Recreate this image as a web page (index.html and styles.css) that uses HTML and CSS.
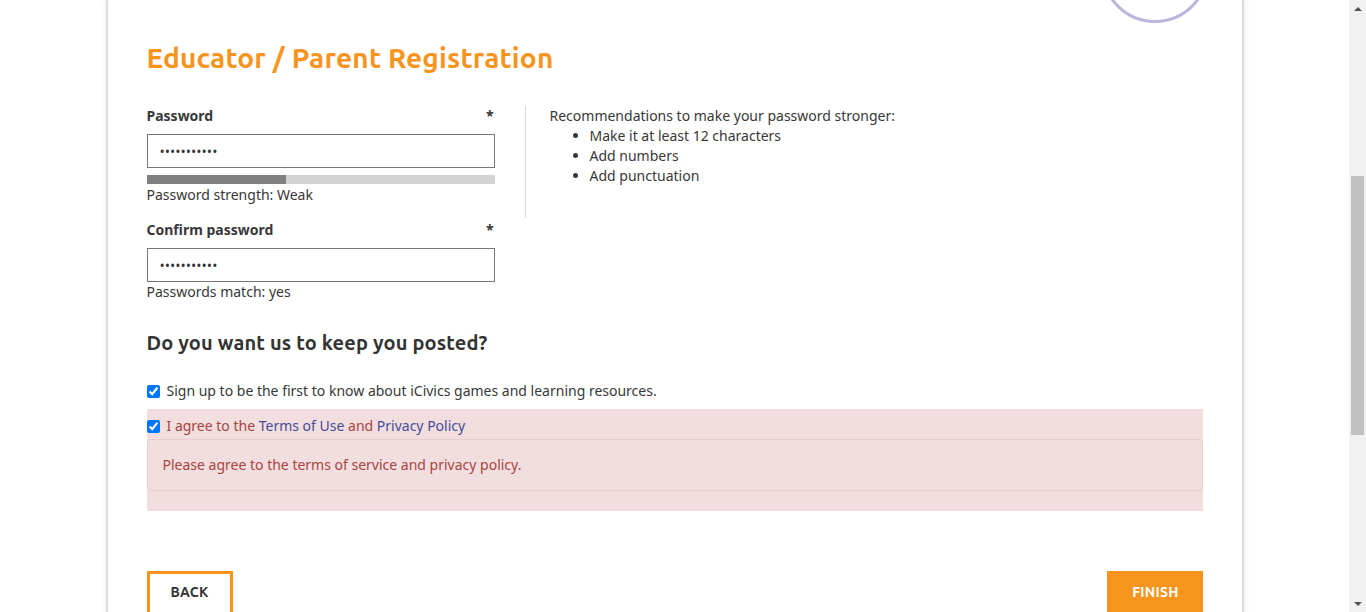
FILE: index.html
```html
<!DOCTYPE html>
<html>
<head>
<meta charset="utf-8">
<link rel="stylesheet" href="styles.css">
</head>
<body>
<div class="viewport">
  <div class="page">
    <div class="card">
      <div class="badge"></div>
      <h1 class="title">Educator / Parent Registration</h1>
      <div class="pw-row">
        <div class="pw-fields">
          <div class="label-row"><label class="label">Password</label><span class="req">*</span></div>
          <input class="field" type="password" value="aaaaaaaaaaa">
          <div class="meter"><div class="meter-fill" style="width:40%"></div></div>
          <div class="help strength">Password strength: Weak</div>
          <div class="label-row second"><label class="label">Confirm password</label><span class="req">*</span></div>
          <input class="field" type="password" value="aaaaaaaaaaa">
          <div class="help">Passwords match: yes</div>
        </div>
        <div class="pw-tips">
          <div class="tips-head">Recommendations to make your password stronger:</div>
          <ul class="tips">
            <li>Make it at least 12 characters</li>
            <li>Add numbers</li>
            <li>Add punctuation</li>
          </ul>
        </div>
      </div>
      <h2 class="subhead">Do you want us to keep you posted?</h2>
      <label class="check-row"><input type="checkbox" checked class="cb"><span>Sign up to be the first to know about iCivics games and learning resources.</span></label>
      <div class="error-group">
        <label class="check-row err"><input type="checkbox" checked class="cb"><span>I agree to the <a class="lnk">Terms of Use</a> and <a class="lnk">Privacy Policy</a></span></label>
        <div class="alert">Please agree to the terms of service and privacy policy.</div>
      </div>
      <div class="actions">
        <button class="btn back">BACK</button>
        <button class="btn finish">FINISH</button>
      </div>
    </div>
  </div>
  <div class="scrollbar">
    <div class="arrow up"></div>
    <div class="track"><div class="thumb"></div></div>
    <div class="arrow down"></div>
  </div>
</div>
</body>
</html>
```
FILE: styles.css
```css
html, body {
  margin: 0;
  padding: 0;
  height: 612px;
  overflow: hidden;
  background: #fff;
}
body {
  font-family: "Noto Sans", "Open Sans", sans-serif;
  font-size: 14px;
  color: #383838;
}
.viewport {
  display: flex;
  height: 612px;
}
.page {
  flex: 1;
  overflow: hidden;
}
.card {
  position: relative;
  width: 1056px;
  margin: 0 auto;
  padding: 40px 39px 60px 39px;
  background: #fff;
  border-left: 2px solid #dcdcdc;
  border-right: 2px solid #dcdcdc;
  box-shadow: 0 0 8px rgba(0,0,0,0.08);
  min-height: 700px;
}
.badge {
  position: absolute;
  left: 993px;
  top: -85px;
  width: 102px;
  height: 102px;
  border: 3px solid #bcb6dc;
  border-radius: 50%;
}
.title {
  margin: 0 0 30px 0;
  font-family: "Ubuntu", "Lato", "Open Sans", sans-serif;
  font-size: 28px;
  font-weight: 700;
  letter-spacing: 0.2px;
  color: #f7941d;
  line-height: 36px;
}
.pw-row {
  display: flex;
  align-items: flex-start;
}
.pw-fields {
  width: 348px;
  margin-right: 30px;
}
.label-row {
  display: flex;
  justify-content: space-between;
  font-weight: 700;
  line-height: 20px;
  padding-right: 1px;
  margin-bottom: 8px;
}
.label-row.second { margin-top: 15px; }
.field {
  display: block;
  box-sizing: border-box;
  width: 348px;
  height: 34px;
  margin: 0;
  padding: 0 12px;
  border: 1px solid #777;
  font-family: "Open Sans", sans-serif;
  font-size: 14px;
  color: #333;
}
.meter {
  margin-top: 7px;
  height: 9px;
  background: #d3d3d3;
}
.meter-fill {
  height: 9px;
  background: #808080;
}
.help {
  line-height: 20px;
}
.help.strength {
  margin-top: 1px;
}
.pw-tips {
  border-left: 1px solid #ddd;
  height: 112px;
  padding-left: 24px;
  line-height: 20px;
}
.tips {
  margin: 0;
  padding-left: 40px;
}
.subhead {
  font-family: "Ubuntu", "Lato", "Open Sans", sans-serif;
  font-size: 20px;
  font-weight: 700;
  letter-spacing: 0.15px;
  margin: 26px 0 23px 0;
  line-height: 30px;
  color: #333;
}
.check-row {
  display: flex;
  align-items: center;
  line-height: 20px;
  gap: 7px;
}
.cb {
  margin: 0;
  width: 13px;
  height: 13px;
  accent-color: #0075ff;
}
.error-group {
  margin-top: 8px;
  background: #f2dede;
  padding: 7px 0 20px 0;
  color: #a94442;
}
.lnk {
  color: #454c9a;
  text-decoration: none;
}
.alert {
  margin-top: 3px;
  border: 1px solid #ebccd1;
  border-radius: 4px;
  padding: 15px 15px;
  line-height: 20px;
  color: #a94442;
}
.actions {
  display: flex;
  justify-content: space-between;
  margin-top: 60px;
}
.btn {
  font-family: "Ubuntu", "Lato", "Open Sans", sans-serif;
  font-size: 14px;
  font-weight: 700;
  height: 44px;
  padding: 0 0 2px 0;
  border: 3px solid #f7941d;
  letter-spacing: 0.3px;
}
.back {
  background: #fff;
  color: #333;
  width: 86px;
}
.finish {
  background: #f7941d;
  color: #fff;
  width: 96px;
  padding-left: 2px;
}
.scrollbar {
  width: 17px;
  background: #f1f1f1;
  display: flex;
  flex-direction: column;
}
.arrow {
  height: 17px;
  display: flex;
  align-items: center;
  justify-content: center;
}
.arrow.up::before {
  content: "";
  border-left: 4px solid transparent;
  border-right: 4px solid transparent;
  border-bottom: 4px solid #505050;
}
.arrow.down::before {
  content: "";
  border-left: 4px solid transparent;
  border-right: 4px solid transparent;
  border-top: 4px solid #505050;
}
.track {
  flex: 1;
  padding: 159px 2px 0 2px;
}
.thumb {
  height: 259px;
  background: #c1c1c1;
}
```
